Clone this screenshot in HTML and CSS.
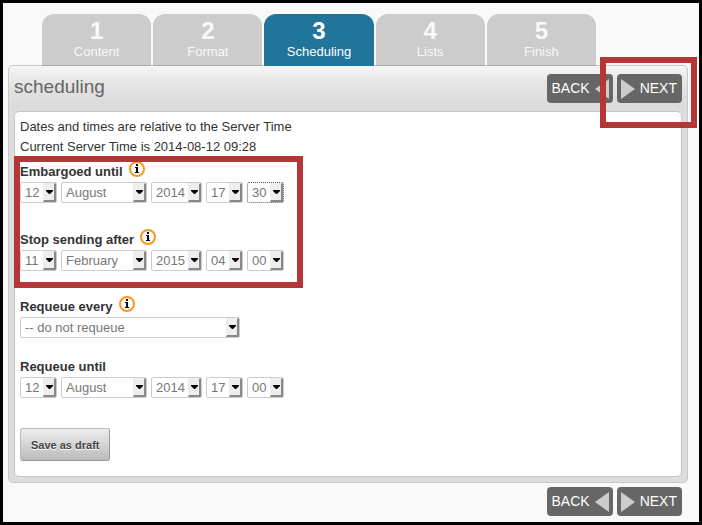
FILE: index.html
```
<!DOCTYPE html>
<html lang="en">
<head>
	<meta charset="UTF-8">
	<title>scheduling</title>
	<link rel="stylesheet" href="styles.css">
</head>
<body>
	<div class="page">
		<nav class="tabs">
			<a class="tab" href="#content"><b>1</b><span>Content</span></a>
			<a class="tab" href="#format"><b>2</b><span>Format</span></a>
			<a class="tab current" href="#scheduling"><b>3</b><span>Scheduling</span></a>
			<a class="tab" href="#lists"><b>4</b><span>Lists</span></a>
			<a class="tab" href="#finish"><b>5</b><span>Finish</span></a>
		</nav>
		<div class="panel">
			<div class="panel_head">
				<h1>scheduling</h1>
				<div class="pager">
					<button class="nav_btn back" type="button">BACK<svg width="14" height="20" viewBox="0 0 14 20"><path d="M14 0v20L0 10z"/></svg></button>
					<button class="nav_btn next" type="button"><svg width="14" height="20" viewBox="0 0 14 20"><path d="M0 0v20l14-10z"/></svg>NEXT</button>
					<div class="mark mark_next"></div>
				</div>
			</div>
			<form class="panel_body">
				<p>Dates and times are relative to the Server Time</p>
				<p>Current Server Time is 2014-08-12 09:28</p>
				<div class="marked">
					<div class="field">
						<div class="field_label">
							<label for="embargo_day">Embargoed until</label>
							<svg class="info" width="16" height="16" viewBox="0 0 16 16"><circle cx="8" cy="8" r="7"/><path d="M7 3h2v2H7zM6 6h3v5h1v1H6v-1h1V7H6z"/></svg>
						</div>
						<div class="selects">
							<select class="num" id="embargo_day"><option>12</option></select>
							<select class="month" aria-label="Embargo month"><option>August</option></select>
							<select class="year" aria-label="Embargo year"><option>2014</option></select>
							<select class="num" aria-label="Embargo hour"><option>17</option></select>
							<select class="num focused" aria-label="Embargo minute"><option>30</option></select>
						</div>
					</div>
					<div class="field">
						<div class="field_label">
							<label for="finish_day">Stop sending after</label>
							<svg class="info" width="16" height="16" viewBox="0 0 16 16"><circle cx="8" cy="8" r="7"/><path d="M7 3h2v2H7zM6 6h3v5h1v1H6v-1h1V7H6z"/></svg>
						</div>
						<div class="selects">
							<select class="num" id="finish_day"><option>11</option></select>
							<select class="month" aria-label="Finish month"><option>February</option></select>
							<select class="year" aria-label="Finish year"><option>2015</option></select>
							<select class="num" aria-label="Finish hour"><option>04</option></select>
							<select class="num" aria-label="Finish minute"><option>00</option></select>
						</div>
					</div>
					<div class="mark mark_dates"></div>
				</div>
				<div class="field field_repeat">
					<div class="field_label">
						<label for="repeat">Requeue every</label>
						<svg class="info" width="16" height="16" viewBox="0 0 16 16"><circle cx="8" cy="8" r="7"/><path d="M7 3h2v2H7zM6 6h3v5h1v1H6v-1h1V7H6z"/></svg>
					</div>
					<div class="selects">
						<select class="wide" id="repeat"><option>-- do not requeue</option></select>
					</div>
				</div>
				<div class="field field_last">
					<div class="field_label">
						<label for="until_day">Requeue until</label>
					</div>
					<div class="selects">
						<select class="num" id="until_day"><option>12</option></select>
						<select class="month" aria-label="Requeue month"><option>August</option></select>
						<select class="year" aria-label="Requeue year"><option>2014</option></select>
						<select class="num" aria-label="Requeue hour"><option>17</option></select>
						<select class="num" aria-label="Requeue minute"><option>00</option></select>
					</div>
				</div>
				<button class="save" type="button">Save as draft</button>
			</form>
		</div>
		<div class="pager pager_bottom">
			<button class="nav_btn back" type="button">BACK<svg width="14" height="20" viewBox="0 0 14 20"><path d="M14 0v20L0 10z"/></svg></button>
			<button class="nav_btn next" type="button"><svg width="14" height="20" viewBox="0 0 14 20"><path d="M0 0v20l14-10z"/></svg>NEXT</button>
		</div>
	</div>
</body>
</html>
```
FILE: styles.css
```
*{box-sizing:border-box;}
body{margin:0;font:13px/20px "Liberation Sans",Arial,sans-serif;color:#333;}
h1,p{margin:0;}
.page{min-height:100vh;padding:11px 11px 6px 5px;border:3px solid #000;background:#f9f9f9;}

/* step tabs */
.tabs{position:relative;z-index:1;display:flex;gap:2px;padding:0 92px 0 34px;}
.tab{flex:1;height:52px;padding-top:5px;border-bottom:1px solid #aaa;border-radius:12px 12px 0 0;background:#ccc;color:#f9f9f9;text-align:center;text-decoration:none;}
.tab b{display:block;font-size:24px;line-height:24px;}
.tab span{display:block;line-height:18px;}
.tab.current{border-bottom-color:#21759b;background:#21759b;color:#fff;}

/* panel */
.panel{margin-top:-1px;padding:0 5px 5px;border:1px solid #c8c8c8;border-radius:5px;background:#ddd linear-gradient(#f6f6f6,#e4e4e4 18px,#ddd 36px) no-repeat 0 0/100% 45px;}
.panel_head{display:flex;justify-content:space-between;padding:8px 0;}
.panel_head h1{font-size:19px;font-weight:normal;line-height:26px;color:#666;}
.panel_body{padding:5px 5px 15px;border:1px solid #c8c8c8;border-radius:5px;background:#fff;}

.pager{position:relative;display:flex;gap:4px;}
.pager_bottom{justify-content:flex-end;margin-top:4px;padding-right:6px;}
.nav_btn{display:flex;align-items:center;gap:5px;height:29px;border:0;border-radius:4px;background:#666;color:#fff;font:14px/29px "Liberation Sans",Arial,sans-serif;}
.back{padding:0 4px 0 5px;}
.next{padding:0 5px 0 4px;}
.nav_btn svg{fill:#ccc;}

/* fields */
.marked{position:relative;margin-top:4px;}
.field{margin-bottom:25px;}
.field:first-child{margin-bottom:26px;}
.field_repeat{margin-bottom:18px;}
.field_last{margin-bottom:30px;}
.field_label{display:flex;gap:6px;height:21px;line-height:22px;font-weight:bold;}
.info circle{fill:#fff;stroke:#f9981c;stroke-width:2;}
.info path{fill:#000;}
.selects{display:flex;gap:4px;}
select{height:21px;padding:0 14px 0 4px;border:1px solid #ccc;border-radius:2px;appearance:none;background:#fff url("data:image/svg+xml,%3Csvg xmlns='http://www.w3.org/2000/svg' width='13' height='19'%3E%3Cpath fill='%23eee' d='M0 0h13v19H0z'/%3E%3Cpath fill='%23888' d='M11 1l2-1v19H0l1-2h10z'/%3E%3Cpath d='M3 7h7v1L7 11H6L3 8z'/%3E%3C/svg%3E") no-repeat right 0 top 0;color:#777;font:13px/19px "Liberation Sans",Arial,sans-serif;}
.num{width:37px;}
.month{width:86px;}
.year{width:51px;}
.wide{width:220px;}
.focused{border:1px dotted #555;}

.save{display:block;height:33px;padding:0 10px;border:1px solid #bbb;border-right-color:#999;border-bottom-color:#999;border-radius:3px;background:linear-gradient(#eee,#bbb);color:#444;font:bold 11px "Liberation Sans",Arial,sans-serif;text-shadow:0 1px 0 #fff;}

/* red frames */
.mark{position:absolute;border:6px solid #b43638;pointer-events:none;z-index:2;}
.mark_dates{left:-6px;top:-5px;width:289px;height:132px;}
.mark_next{right:-15px;top:-17px;width:97px;height:71px;}
```
